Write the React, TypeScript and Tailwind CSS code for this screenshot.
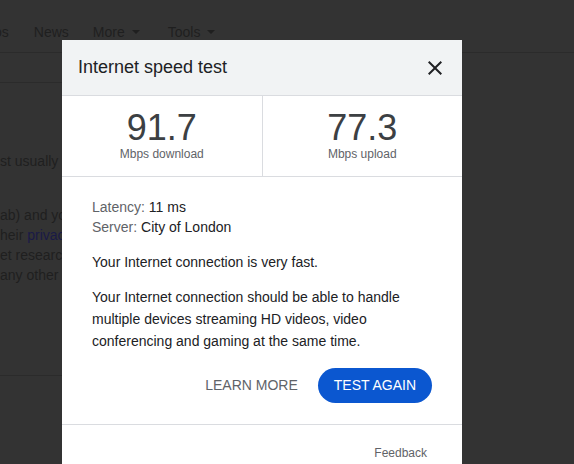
const Caret = () => (
  <svg width="8" height="4" viewBox="0 0 8 4" className="ml-[7px] inline-block align-middle">
    <path d="M0 0h8L4 4z" fill="#1f1f1f" />
  </svg>
);

function BackgroundPage() {
  return (
    <div className="text-[14px] leading-5 text-[#1f1f1f]">
      <div className="h-[53px] border-b border-[#2b2b2b] pt-[22px]">
        <div className="flex items-center">
          <span className="ml-[-6px]">os</span>
          <span className="ml-[25px]">News</span>
          <span className="ml-[24px] flex items-center">
            More
            <Caret />
          </span>
          <span className="ml-[28px] flex items-center">
            Tools
            <Caret />
          </span>
        </div>
      </div>
      <div className="h-[30px] w-[400px] border-b border-[#2b2b2b]" />
      <div className="w-[62px] overflow-hidden whitespace-nowrap pt-[68px] text-[14px] leading-5">
        <p>st usually t</p>
        <p className="mt-[34px]">ab) and you</p>
        <p>
          heir <span className="text-[#1a1a46]">privacy</span>
        </p>
        <p>et research</p>
        <p>any other in</p>
      </div>
      <div className="mt-[90px] w-[400px] border-b border-[#2b2b2b]" />
    </div>
  );
}

function Stat({ value, label, divider }: { value: string; label: string; divider?: boolean }) {
  return (
    <div
      className={`flex flex-1 flex-col items-center py-[14px] ${divider ? "border-r border-[#dadce0]" : ""}`}
    >
      <div className="text-[36px] leading-[36px] text-[#3c4043]">{value}</div>
      <div className="text-[12px] leading-4 text-[#5f6368]">{label}</div>
    </div>
  );
}

export default function App() {
  return (
    <div
      className="relative h-[464px] w-full overflow-hidden bg-[#333333]"
      style={{ fontFamily: '"Liberation Sans", Arial, sans-serif' }}
    >
      <BackgroundPage />

      <div className="absolute left-[62px] top-[40px] w-[400px] bg-white">
        <div className="flex h-[56px] items-center justify-between border-b border-[#dadce0] bg-[#f1f3f4] pl-4 pr-[15px]">
          <h2 className="text-[18px] text-[#202124]">Internet speed test</h2>
          <svg width="24" height="24" viewBox="0 0 24 24">
            <path
              d="M19 6.41L17.59 5 12 10.59 6.41 5 5 6.41 10.59 12 5 17.59 6.41 19 12 13.41 17.59 19 19 17.59 13.41 12z"
              fill="#202124"
            />
          </svg>
        </div>

        <div className="flex border-b border-[#dadce0]">
          <Stat value="91.7" label="Mbps download" divider />
          <Stat value="77.3" label="Mbps upload" />
        </div>

        <div className="px-[30px] pt-5 text-[14px] text-[#202124]">
          <div className="leading-5">
            <div>
              <span className="text-[#5f6368]">Latency: </span>11 ms
            </div>
            <div>
              <span className="text-[#5f6368]">Server: </span>City of London
            </div>
          </div>
          <p className="mt-[14px] leading-[22px]">Your Internet connection is very fast.</p>
          <p className="mt-[13px] leading-[22px]">
            Your Internet connection should be able to handle multiple devices streaming HD videos, video
            conferencing and gaming at the same time.
          </p>
          <div className="mt-4 flex items-center justify-end gap-[20px]">
            <button className="text-[14px] text-[#5f6368]">LEARN MORE</button>
            <button className="h-[35px] rounded-full bg-[#0b57d0] px-4 text-[14px] text-white">
              TEST AGAIN
            </button>
          </div>
        </div>

        <div className="mt-[21px] border-t border-[#dadce0] pr-[35px] pt-5 text-right text-[12px] leading-4 text-[#5f6368]">
          Feedback
        </div>
        <div className="h-10" />
      </div>
    </div>
  );
}
